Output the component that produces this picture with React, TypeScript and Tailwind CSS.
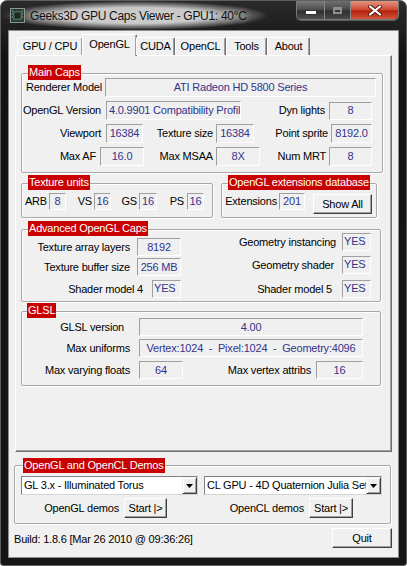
import React from 'react';

type P = { className?: string; children?: React.ReactNode };

function Lbl({ className = '', children }: P) {
  return <span className={`shrink-0 text-right whitespace-nowrap text-black ${className}`}>{children}</span>;
}

const alignCls = {
  center: 'items-center justify-center',
  left: 'items-center justify-start pl-[2px]',
  top: 'items-start justify-start pl-[1px] pt-[1px]',
};

function Val({ className = '', children, align = 'center' }: P & { align?: keyof typeof alignCls }) {
  return (
    <div
      className={`shrink-0 flex overflow-hidden whitespace-nowrap border border-t-[#a0a0a0] border-l-[#a0a0a0] border-r-white border-b-white text-[#34348c] leading-[13px] ${alignCls[align]} ${className}`}
    >
      {children}
    </div>
  );
}

function Btn({ className = '', children }: P) {
  return (
    <button
      type="button"
      className={`shrink-0 flex items-center justify-center bg-[#f0f0f0] border border-t-white border-l-white border-r-[#404040] border-b-[#404040] shadow-[inset_-1px_-1px_0_#a0a0a0] text-black leading-[13px] ${className}`}
    >
      {children}
    </button>
  );
}

function Group({ title, className = '', titleClass = '', children }: P & { title: string; titleClass?: string }) {
  return (
    <div
      className={`relative shrink-0 border border-[#a8a8a8] rounded-[2px] shadow-[inset_1px_1px_0_#fff,1px_1px_0_#fff] ${className}`}
    >
      <span className={`absolute bg-[#c80000] text-white leading-[15px] px-px whitespace-nowrap ${titleClass}`}>{title}</span>
      {children}
    </div>
  );
}

function Combo({ className = '', text }: { className?: string; text: string }) {
  return (
    <div
      className={`shrink-0 flex h-[19px] bg-white border border-t-[#828282] border-l-[#828282] border-r-[#d4d4d4] border-b-[#d4d4d4] ${className}`}
    >
      <span className="flex-1 overflow-hidden whitespace-nowrap pl-[2px] leading-[17px] text-black">{text}</span>
      <div className="w-[15px] h-full flex items-center justify-center bg-[#f0f0f0] border border-t-[#f0f0f0] border-l-[#f0f0f0] border-r-[#404040] border-b-[#404040] shadow-[inset_1px_1px_0_#fff,inset_-1px_-1px_0_#a0a0a0]">
        <svg width="7" height="4" viewBox="0 0 7 4">
          <path d="M0 0h7L3.5 4z" fill="#000" />
        </svg>
      </div>
    </div>
  );
}

const tabs = [
  { t: 'GPU / CPU', w: 'w-[66px]' },
  { t: 'OpenGL', w: 'w-[55px]', on: true },
  { t: 'CUDA', w: 'w-[39px]' },
  { t: 'OpenCL', w: 'w-[51px]' },
  { t: 'Tools', w: 'w-[41px]' },
  { t: 'About', w: 'w-[43px]' },
];

function TitleBar() {
  return (
    <div className="h-[29px] flex items-start shrink-0">
      <div className="h-full flex items-center -ml-[6px] pl-[8px] pr-[22px] bg-[radial-gradient(closest-side,rgba(200,200,200,1)_55%,rgba(150,150,150,0.6)_82%,transparent)]">
        <svg width="15" height="15" viewBox="0 0 15 15" className="shrink-0">
          <rect x="0.5" y="0.5" width="14" height="14" fill="#2c3a33" stroke="#8a9a92" />
          <rect x="3" y="3" width="9" height="9" fill="#3f6b52" />
          <rect x="4.5" y="4.5" width="6" height="6" fill="#1d2a22" />
          <path d="M2 3h1M2 6h1M2 9h1M12 3h1M12 6h1M12 9h1" stroke="#b8c4bd" />
        </svg>
        <span className="ml-[5px] text-[12px] leading-[16px] text-[#111] tracking-[-0.3px] whitespace-nowrap [text-shadow:0_0_6px_rgba(230,230,230,0.9)]">
          Geeks3D GPU Caps Viewer - GPU1: 40°C
        </span>
      </div>
      <div className="flex-1" />
      <div className="flex h-[19px] rounded-b-[5px] border border-t-0 border-[#7a7a7a] overflow-hidden shadow-[0_1px_0_rgba(255,255,255,0.25)]">
        <div className="w-[28px] h-full flex items-end justify-center pb-[5px] bg-[linear-gradient(#7d7d7d,#4a4a4a_50%,#2e2e2e_55%,#505050)] border-r border-[#8a8a8a]">
          <div className="w-[10px] h-[3px] bg-white border border-[#333] box-content -mb-px" />
        </div>
        <div className="w-[26px] h-full flex items-center justify-center bg-[linear-gradient(#707070,#464646_50%,#2e2e2e_55%,#4a4a4a)] border-r border-[#8a8a8a]">
          <div className="w-[9px] h-[7px] border-2 border-[#8e8e8e] border-t-[3px]" />
        </div>
        <div className="w-[47px] h-full flex items-center justify-center bg-[linear-gradient(#e49580,#cf4a33_48%,#b5200d_55%,#d0573c)]">
          <svg width="14" height="11" viewBox="0 0 14 11">
            <path d="M2 1.5l10 8M12 1.5l-10 8" stroke="#5a1a10" strokeWidth="4" strokeLinecap="round" />
            <path d="M2 1.5l10 8M12 1.5l-10 8" stroke="#fff" strokeWidth="2.2" strokeLinecap="round" />
          </svg>
        </div>
      </div>
    </div>
  );
}

export default function App() {
  return (
    <div className="w-[407px] h-[566px] bg-white font-['Liberation_Sans',Arial,sans-serif] text-[11px] leading-[13px] tracking-[-0.2px]">
      <div className="h-full flex flex-col rounded-t-[7px] rounded-b-[3px] border border-[#5e5e5e] bg-[linear-gradient(#2a2a2a,#121212_60px,#161616)] px-[7px] pb-[7px]">
        <TitleBar />
        <div className="flex-1 flex flex-col bg-[#f0f0f0] border border-[#8c8c8c]">
          {/* tabs */}
          <div className="relative z-10 flex items-end h-[21px] mt-[3px] ml-[8px]">
            {tabs.map((tab) =>
              tab.on ? (
                <div
                  key={tab.t}
                  className={`${tab.w} h-[22px] -mb-px -mx-px flex justify-center pt-[3px] bg-[#f0f0f0] border-l border-t border-r border-l-white border-t-white border-r-[#6e6e6e] shadow-[inset_-1px_0_0_#a0a0a0] rounded-t-[2px] text-black`}
                >
                  {tab.t}
                </div>
              ) : (
                <div
                  key={tab.t}
                  className={`${tab.w} h-[18px] flex items-center justify-center bg-[#f0f0f0] border-l border-t border-r border-l-white border-t-white border-r-[#6e6e6e] shadow-[inset_-1px_0_0_#a0a0a0] rounded-t-[2px] text-black`}
                >
                  {tab.t}
                </div>
              )
            )}
          </div>

          {/* tab panel */}
          <div className="ml-[6px] w-[377px] h-[397px] shrink-0 flex flex-col border border-t-white border-l-white border-r-[#6e6e6e] border-b-[#6e6e6e] shadow-[inset_-1px_-1px_0_#a0a0a0]">
            {/* Main Caps */}
            <Group title="Main Caps" className="ml-[5px] mt-[17px] w-[362px] h-[100px] pt-[4px] flex flex-col gap-[4px]" titleClass="top-[-9px] left-[6px]">
              <div className="flex items-center h-[19px]">
                <Lbl className="w-[80px]">Renderer Model</Lbl>
                <Val className="ml-[3px] w-[271px] h-[19px]">ATI Radeon HD 5800 Series</Val>
              </div>
              <div className="flex items-center h-[19px]">
                <Lbl className="w-[79px]">OpenGL Version</Lbl>
                <Val className="ml-[5px] w-[135px] h-[19px]" align="left">
                  4.0.9901 Compatibility Profile
                </Val>
                <Lbl className="w-[84px]">Dyn lights</Lbl>
                <Val className="ml-[4px] w-[43px] h-[18px]">8</Val>
              </div>
              <div className="flex items-center h-[19px]">
                <Lbl className="w-[79px]">Viewport</Lbl>
                <Val className="ml-[5px] w-[37px] h-[19px]">16384</Val>
                <Lbl className="w-[70px]">Texture size</Lbl>
                <Val className="ml-[3px] w-[38px] h-[19px]">16384</Val>
                <Lbl className="w-[74px]">Point sprite</Lbl>
                <Val className="ml-[3px] w-[41px] h-[19px]">8192.0</Val>
              </div>
              <div className="flex items-center h-[19px]">
                <Lbl className="w-[74px]">Max AF</Lbl>
                <Val className="ml-[4px] w-[44px] h-[19px]">16.0</Val>
                <Lbl className="w-[69px]">Max MSAA</Lbl>
                <Val className="ml-[3px] w-[44px] h-[19px]">8X</Val>
                <Lbl className="w-[66px]">Num MRT</Lbl>
                <Val className="ml-[3px] w-[43px] h-[19px]">8</Val>
              </div>
            </Group>

            {/* Texture units + extensions */}
            <div className="flex mt-[10px] ml-[5px]">
              <Group title="Texture units" className="w-[192px] h-[35px] pt-[9px]" titleClass="top-[-9px] left-[6px]">
                <div className="flex items-center h-[17px]">
                  <Lbl className="w-[25px]">ARB</Lbl>
                  <Val className="ml-[2px] w-[17px] h-[17px]">8</Val>
                  <Lbl className="w-[26px]">VS</Lbl>
                  <Val className="ml-[2px] w-[17px] h-[17px]">16</Val>
                  <Lbl className="w-[26px]">GS</Lbl>
                  <Val className="ml-[2px] w-[18px] h-[17px]">16</Val>
                  <Lbl className="w-[27px]">PS</Lbl>
                  <Val className="ml-[3px] w-[17px] h-[17px]">16</Val>
                </div>
              </Group>
              <Group title="OpenGL extensions database" className="ml-[8px] w-[156px] h-[35px] pt-[9px]" titleClass="top-[-9px] left-[6px]">
                <div className="flex items-start">
                  <Lbl className="w-[55px] leading-[17px]">Extensions</Lbl>
                  <Val className="ml-[2px] w-[26px] h-[17px]">201</Val>
                  <Btn className="ml-[8px] mt-px w-[59px] h-[20px]">Show All</Btn>
                </div>
              </Group>
            </div>

            {/* Advanced */}
            <Group title="Advanced OpenGL Caps" className="ml-[5px] mt-[11px] w-[360px] h-[73px] flex" titleClass="top-[-9px] left-[6px]">
              <div className="w-[159px] flex flex-col items-end pt-[8px]">
                <div className="flex items-center">
                  <Lbl>Texture array layers</Lbl>
                  <Val className="ml-[7px] w-[44px] h-[18px]">8192</Val>
                </div>
                <div className="flex items-center mt-[2px]">
                  <Lbl>Texture buffer size</Lbl>
                  <Val className="ml-[7px] w-[44px] h-[18px]">256 MB</Val>
                </div>
                <div className="flex items-center mt-[4px]">
                  <Lbl>Shader model 4</Lbl>
                  <Val className="ml-[9px] w-[29px] h-[18px]" align="top">YES</Val>
                </div>
              </div>
              <div className="flex-1 flex flex-col items-end pt-[3px] pr-[9px]">
                <div className="flex items-center">
                  <Lbl>Geometry instancing</Lbl>
                  <Val className="ml-[6px] w-[29px] h-[18px]" align="top">YES</Val>
                </div>
                <div className="flex items-center mt-[5px]">
                  <Lbl>Geometry shader</Lbl>
                  <Val className="ml-[8px] w-[29px] h-[18px]" align="top">YES</Val>
                </div>
                <div className="flex items-center mt-[6px]">
                  <Lbl>Shader model 5</Lbl>
                  <Val className="ml-[10px] w-[29px] h-[18px]" align="top">YES</Val>
                </div>
              </div>
            </Group>

            {/* GLSL */}
            <Group title="GLSL" className="ml-[5px] mt-[9px] w-[360px] h-[75px] pt-[6px] flex flex-col" titleClass="top-[-9px] left-[5px]">
              <div className="flex items-center">
                <Lbl className="w-[102px]">GLSL version</Lbl>
                <Val className="ml-[15px] w-[224px] h-[18px]">4.00</Val>
              </div>
              <div className="flex items-center mt-[3px]">
                <Lbl className="w-[108px]">Max uniforms</Lbl>
                <Val className="ml-[9px] w-[224px] h-[18px] whitespace-pre">{'Vertex:1024  -  Pixel:1024  -  Geometry:4096'}</Val>
              </div>
              <div className="flex items-center mt-[4px]">
                <Lbl className="w-[108px]">Max varying floats</Lbl>
                <Val className="ml-[9px] w-[44px] h-[18px]">64</Val>
                <Lbl className="w-[128px]">Max vertex attribs</Lbl>
                <Val className="ml-[5px] w-[47px] h-[18px]">16</Val>
              </div>
            </Group>
          </div>

          {/* Demos */}
          <Group title="OpenGL and OpenCL Demos" className="ml-[5px] mt-[13px] w-[377px] h-[59px] pt-[10px] flex flex-col" titleClass="top-[-8px] left-[8px]">
            <div className="flex">
              <Combo className="ml-[6px] w-[177px]" text="GL 3.x - Illuminated Torus" />
              <Combo className="ml-[6px] w-[178px]" text="CL GPU - 4D Quaternion Julia Set" />
            </div>
            <div className="flex items-center mt-[3px]">
              <Lbl className="w-[104px]">OpenGL demos</Lbl>
              <Btn className="ml-[5px] w-[43px] h-[20px]">{'Start |>'}</Btn>
              <Lbl className="w-[137px]">OpenCL demos</Lbl>
              <Btn className="ml-[5px] w-[44px] h-[20px]">{'Start |>'}</Btn>
            </div>
          </Group>

          {/* footer */}
          <div className="flex items-start justify-between mt-[4px]">
            <span className="ml-[5px] mt-[5px] text-black whitespace-nowrap">Build: 1.8.6 [Mar 26 2010 @ 09:36:26]</span>
            <Btn className="mr-[6px] w-[60px] h-[20px]">Quit</Btn>
          </div>
        </div>
      </div>
    </div>
  );
}
